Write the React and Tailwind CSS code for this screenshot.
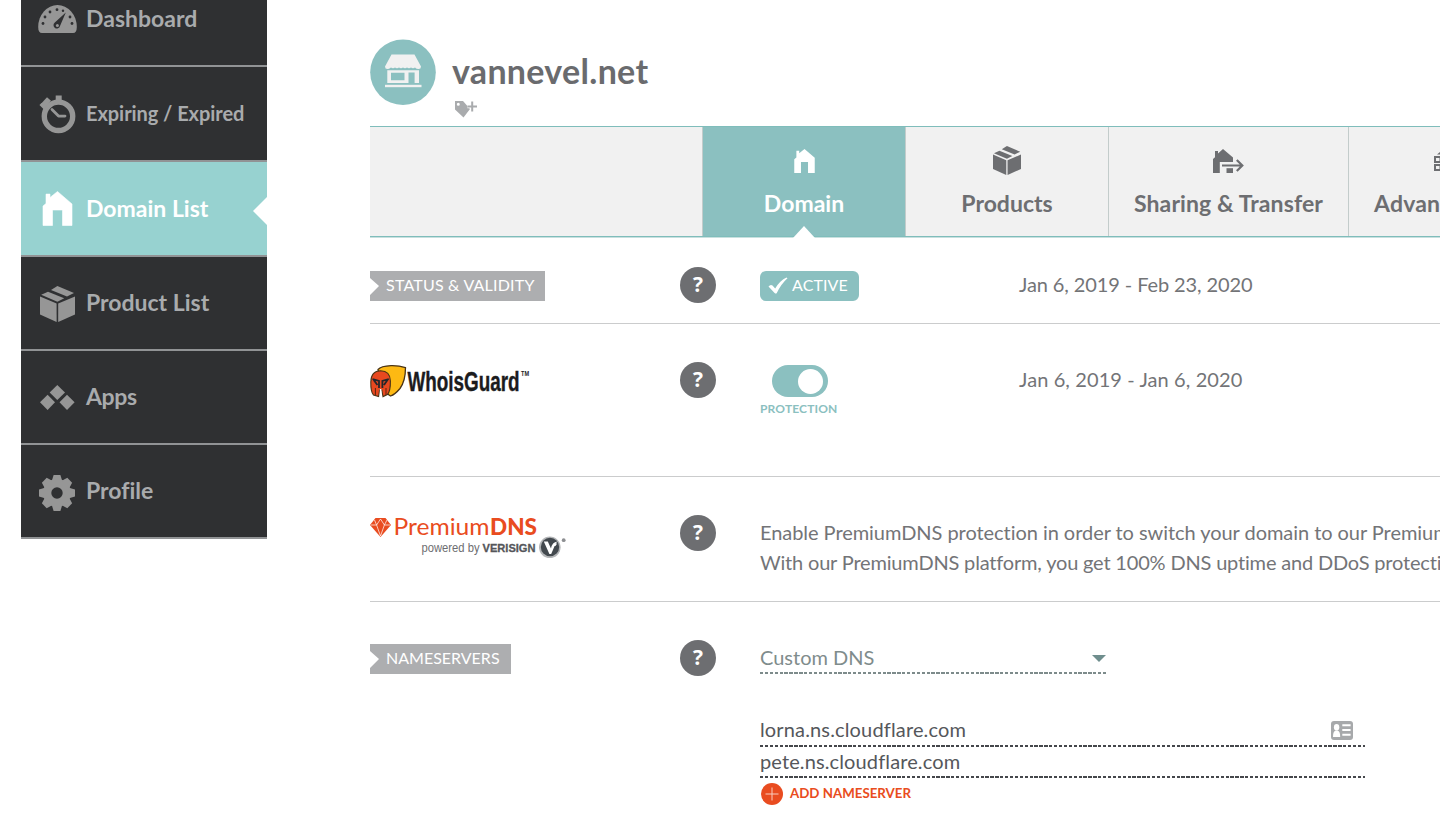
import clsx from "clsx";

const HOUSE = "M0 14.5 L3 12 V2.6 H7 V6 L14.5 0 L29 12.5 V34 H19.5 V18.5 H9.5 V34 H0 Z";

function Gauge() {
  return (
    <svg width="40" height="40" viewBox="37 -1 40 40" fill="#969696">
      <path d="M42 33 Q38.2 33 38.2 27 A19.3 22 0 0 1 76.8 27 Q76.8 33 73 33 Z" />
      <g fill="#2f3032">
        <path d="M65.8 12.5 L60 26 A3.3 3.3 0 1 1 54.8 22.6 Z" />
        <circle cx="43" cy="23.5" r="1.4" />
        <circle cx="45" cy="17" r="1.4" />
        <circle cx="50" cy="12" r="1.4" />
        <circle cx="57" cy="9.7" r="1.4" />
        <circle cx="63" cy="10.8" r="1.2" />
        <circle cx="70" cy="17" r="1.4" />
        <circle cx="72" cy="23.5" r="1.4" />
      </g>
      <circle cx="57.4" cy="25.6" r="1.5" />
    </svg>
  );
}

function Stopwatch() {
  return (
    <svg width="40" height="40" viewBox="37 93.5 40 40" fill="none" stroke="#969696">
      <circle cx="58.5" cy="115.8" r="14.2" strokeWidth="5.4" />
      <path d="M58.7 95 V100" strokeWidth="6" />
      <path d="M42.5 105.5 L49 98.5" strokeWidth="5.4" />
      <path d="M40.5 103.5 L46 109" strokeWidth="3" />
      <path d="M52 109 L58.5 115.6 H65" strokeWidth="2.8" strokeLinecap="round" strokeLinejoin="round" />
    </svg>
  );
}

function HouseSide() {
  return (
    <svg width="40" height="40" viewBox="-6 -2.5 40 40" fill="#ffffff" stroke="#ffffff" strokeLinejoin="round">
      <path d={HOUSE} strokeWidth=".6" />
    </svg>
  );
}

function Box({ className }) {
  return (
    <svg className={className} viewBox="0 0 35 36" fill="currentColor">
      <path d="M0 10.6 L16.6 17.6 V36 L0 28.6 Z" />
      <path d="M35 10.6 L18.2 17.6 V36 L35 28.6 Z" />
      <path d="M1.2 8.8 L8 5.8 L24.2 12.3 L17.4 15.7 Z" />
      <path d="M11 4 L17.4 0 L34 7 L27 10.6 Z" />
    </svg>
  );
}

function Diamonds() {
  return (
    <svg width="40" height="40" viewBox="37 377 40 40" fill="#969696">
      <path d="M57.3 385 L65 392.6 L57.3 400 L49.7 392.6 Z" />
      <path d="M47.6 394.8 L55 402.3 L47.6 410 L40 402.3 Z" />
      <path d="M67 394.8 L74.6 402.3 L67 410 L59.5 402.3 Z" />
    </svg>
  );
}

function Gear() {
  return (
    <svg width="40" height="40" viewBox="-20 -22 40 40" fill="#969696">
      <circle r="9.8" fill="none" stroke="#969696" strokeWidth="8.2" />
      {[0, 45, 90, 135, 180, 225, 270, 315].map((a) => (
        <path key={a} d="M-5.2 -12 L-3.4 -18 H3.4 L5.2 -12 Z" transform={`rotate(${a})`} />
      ))}
    </svg>
  );
}

function SideItem({ icon, label, className, labelClass }) {
  return (
    <a
      className={clsx(
        "relative flex items-center gap-[9px] border-b-2 border-[#919395] pl-4 font-bold whitespace-nowrap",
        className,
      )}
    >
      <span className="flex w-10 shrink-0 justify-center">{icon}</span>
      <span className={clsx("mb-0.5", labelClass)}>{label}</span>
    </a>
  );
}

function Sidebar() {
  return (
    <nav className="flex w-[246px] shrink-0 flex-col self-start bg-[#2f3032] text-[23px] leading-7 text-[#a9abad]">
      <SideItem icon={<Gauge />} label="Dashboard" className="h-[67px] pb-7" />
      <SideItem icon={<Stopwatch />} label="Expiring / Expired" className="h-[95px]" labelClass="text-[20px] tracking-[-0.06px]" />
      <div className="relative flex flex-col">
        <SideItem icon={<HouseSide />} label="Domain List" className="h-[95px] bg-[#97d2d0] text-white" />
        <svg className="absolute top-[35px] right-0" width="14" height="28" viewBox="0 0 14 28" fill="#ffffff">
          <path d="M14 0 V28 L0 14 Z" />
        </svg>
      </div>
      <SideItem icon={<Box className="mt-0.5 h-9 w-[35px] text-[#969696]" />} label="Product List" className="h-[94px]" />
      <SideItem icon={<Diamonds />} label="Apps" className="h-[94px]" labelClass="tracking-[-0.4px]" />
      <SideItem icon={<Gear />} label="Profile" className="h-[94px]" />
    </nav>
  );
}

function Storefront() {
  return (
    <svg width="66" height="66" viewBox="370 39 66 66">
      <circle cx="403" cy="72.2" r="32.8" fill="#8bc0c0" />
      <g fill="#f1f1f1">
        <path d="M391.5 54.5 H414.5 L421 66.5 Q421 69 418.6 69 Q416.4 69 415 67.5 Q413 69 411 67.5 Q409 69 407 67.5 Q405 69 403 67.5 Q401 69 399 67.5 Q397 69 395 67.5 Q393 69 391 67.5 Q389 69 387.4 69 Q385 69 385 66.5 Z" />
        <path fillRule="evenodd" d="M387.3 70.3 H419 V83 H414.6 V72.5 H408.5 V83 H387.3 Z M391 72.8 H404.5 V80.3 H391 Z" />
        <rect x="385" y="84.8" width="36.5" height="2.4" />
      </g>
    </svg>
  );
}

function TagPlus() {
  return (
    <svg width="24" height="18" viewBox="454 100 24 18">
      <path fillRule="evenodd" fill="#a9abad" d="M455 101 H463 L470 109 L463.5 117.5 L455 109.5 Z M456.8 104.2 a1.5 1.5 0 1 0 3 0 a1.5 1.5 0 1 0 -3 0" />
      <path d="M467.4 106.5 H477 M472.2 101.5 V111.5" stroke="#ffffff" strokeWidth="3.4" />
      <path d="M467.4 106.5 H477 M472.2 101.5 V111.5" stroke="#a9abad" strokeWidth="2" />
    </svg>
  );
}

function TransferIcon() {
  return (
    <svg width="31" height="24" viewBox="0 0 31 24" fill="#6d6e71">
      <path d="M0 10 L2 8.2 V2 H5 V4.4 L10 0 L20 8.5 V13 H6.8 V24 H0 Z" />
      <path d="M13.5 19.2 H20 V24 H13.5 Z" />
      <path d="M9 16.5 H29 M23.8 11 L29.3 16.5 L23.8 22" fill="none" stroke="#f1f1f1" strokeWidth="4.6" />
      <path d="M9 16.5 H29 M23.8 11 L29.3 16.5 L23.8 22" fill="none" stroke="#6d6e71" strokeWidth="2.2" />
    </svg>
  );
}

function ServerHouse() {
  return (
    <svg width="32" height="25" viewBox="0 0 32 25" fill="none" stroke="#6d6e71" strokeWidth="2">
      <path d="M3 6.5 L10.5 0 L18 6.5 Z" fill="#6d6e71" stroke="none" />
      <path d="M1 8.9 H18 V14 H1 Z M1 16.9 H18 V22 H1 Z M6.5 9 V14 M6.5 17 V22" />
    </svg>
  );
}

function Tab({ icon, label, className }) {
  return (
    <div className={clsx("relative flex shrink-0 flex-col items-center text-[23px] leading-7 font-bold whitespace-nowrap", className)}>
      <span className="flex h-[62px] items-center pt-[5px]">{icon}</span>
      <span>{label}</span>
    </div>
  );
}

function Tabs() {
  return (
    <div className="flex h-[111px] border-y border-[#7fbdbb] bg-[#f1f1f1] text-[#6d6e71] shadow-[0_1px_0_#c9e0df]">
      <div className="w-[333px] shrink-0 border-r border-[#c3cccb]" />
      <div className="relative w-[202px] shrink-0 bg-[#8bc0c0]">
        <Tab
          className="h-full text-white"
          label="Domain"
          icon={
            <svg className="mt-px" width="21" height="24" viewBox="0 0 29 34" fill="#ffffff">
              <path d={HOUSE} />
            </svg>
          }
        />
        <svg className="absolute -bottom-0.5 left-[90px]" width="22" height="12" viewBox="0 0 22 12" fill="#ffffff">
          <path d="M0 12 L11 0 L22 12 Z" />
        </svg>
      </div>
      <Tab className="w-[204px] border-x border-[#c3cccb]" label="Products" icon={<Box className="mb-px h-[29px] w-7" />} />
      <Tab
        className="w-[240px] border-r border-[#c3cccb]"
        label={<span className="tracking-[0.1px]">Sharing &amp; Transfer</span>}
        icon={<TransferIcon />}
      />
      <div className="flex w-40 shrink-0 flex-col text-[23px] leading-7 font-bold whitespace-nowrap">
        <span className="flex h-[62px] items-center pt-[5px] pl-[85px]">
          <ServerHouse />
        </span>
        <span className="pl-[25px] tracking-[0.2px]">Advanced DNS</span>
      </div>
    </div>
  );
}

function Help({ className }) {
  return (
    <span className={clsx("flex size-9 shrink-0 items-center justify-center rounded-full bg-[#6d6e71] pb-px font-['Open_Sans'] text-[21px] leading-none font-bold text-white", className)}>
      ?
    </span>
  );
}

function Ribbon({ children, className }) {
  return (
    <span className={clsx("flex h-[30px] items-center bg-[#adaeb0] pb-0.5 pl-4 text-base whitespace-nowrap text-white [clip-path:polygon(0_0,100%_0,100%_100%,0_100%,0_24px,9px_15px,0_7px)]", className)}>
      {children}
    </span>
  );
}

function WhoisGuardLogo() {
  return (
    <svg width="162" height="36" viewBox="370 362 162 36">
      <path d="M378 369.5 Q381 366 391 365.6 Q399 365.4 405.5 367.6 Q405.5 381 400 388.5 Q395 394.5 390.5 396 Q383 392 381 384 Z" fill="#fdb913" stroke="#4a3416" strokeWidth="1.3" />
      <path d="M373.5 395 Q370.6 392 370.8 382 Q371 371 380.6 370.8 Q390.2 371 390.4 381 Q390.6 391 387.4 394.6 L383 396.6 L381.8 390 H379.6 L378.6 396.6 Z" fill="#e8481f" stroke="#4a3416" strokeWidth="1.1" />
      <path d="M372.5 379 L379 381 V388 M388.8 379 L382.4 381 V388 M373.5 379.6 L377.4 385 M387.8 379.6 L384 385" stroke="#24262b" strokeWidth="1.8" fill="none" />
      <path d="M380.6 389 V397" stroke="#ffffff" strokeWidth="1.6" />
      <path d="M375.4 388 V395.5 M386 388 V395" stroke="#5a2412" strokeWidth="1" />
      <text x="407.5" y="390.6" fontFamily="Liberation Sans" fontWeight="700" fontSize="27" fill="#1b1b1d" stroke="#1b1b1d" strokeWidth=".4" textLength="112" lengthAdjust="spacingAndGlyphs">WhoisGuard</text>
      <text x="521" y="375.5" fontFamily="Liberation Sans" fontWeight="700" fontSize="7" fill="#1b1b1d" textLength="8" lengthAdjust="spacingAndGlyphs">TM</text>
    </svg>
  );
}

function PremiumDnsLogo() {
  return (
    <svg width="200" height="46" viewBox="370 514 200 46">
      <path d="M375.5 518 H385.5 L391 525 L380.5 537 L370 525 Z" fill="#e94c20" />
      <path d="M371 525 H376.6 L380.5 519 L384.4 525 H390 M376.6 525 L380.5 536 M380.5 536 L384.4 525 M374.5 520 L376.6 525 M384.4 525 L387 520" fill="none" stroke="#ffffff" strokeWidth=".7" />
      <text x="393.5" y="534.8" fontFamily="Lato" fontSize="23.5" fill="#e94c20" textLength="96" lengthAdjust="spacingAndGlyphs">Premium</text>
      <text x="490" y="534.8" fontFamily="Lato" fontWeight="900" fontSize="22.5" fill="#e94c20" textLength="47" lengthAdjust="spacingAndGlyphs">DNS</text>
      <text x="421.5" y="551.8" fontFamily="Liberation Sans" fontSize="12" fill="#6d6e71" textLength="58" lengthAdjust="spacingAndGlyphs">powered by</text>
      <text x="482.5" y="551.8" fontFamily="Liberation Sans" fontWeight="700" fontSize="11.5" fill="#54565a" stroke="#54565a" strokeWidth=".3" textLength="53" lengthAdjust="spacingAndGlyphs">VERISIGN</text>
      <circle cx="549.8" cy="547.3" r="10.8" fill="#b4b6b8" />
      <circle cx="550" cy="547" r="9.2" fill="#43494e" />
      <path d="M543.8 541.5 H547.8 L551 548.6 Q552 542 557.5 541.5 L555.6 543.6 H557.2 L555.4 546 H554.6 L551.2 554 H549.4 Z" fill="#ffffff" />
      <circle cx="563.7" cy="540.2" r="1.9" fill="#8d8f92" />
    </svg>
  );
}

function Row({ label, help, children, className }) {
  return (
    <section className={clsx("flex border-[#cbcccd]", className)}>
      <div className="w-[310px] shrink-0">{label}</div>
      <div className="w-20 shrink-0">{help}</div>
      {children}
    </section>
  );
}

export default function App() {
  return (
    <div className="flex h-[828px] w-[1440px] overflow-hidden bg-white pl-[21px] font-[Lato,sans-serif] text-[20px] text-[#737477] [font-variant-ligatures:none]">
      <Sidebar />
      <main className="ml-[103px] w-[1070px] shrink-0">
        <header className="flex h-[126px] items-start pt-[39px]">
          <Storefront />
          <div className="flex flex-col pl-4">
            <h1 className="pt-3 text-[34px] leading-[40px] font-bold tracking-[0.3px] text-[#6a6b6e]">vannevel.net</h1>
            <span className="mt-[9px] pl-0.5">
              <TagPlus />
            </span>
          </div>
        </header>
        <Tabs />

        <Row
          className="h-[87px] border-b pt-[30px]"
          label={<Ribbon className="mt-1 w-[175px] tracking-[0.2px]">STATUS &amp; VALIDITY</Ribbon>}
          help={<Help />}
        >
          <div className="w-[259px] shrink-0 pt-1">
            <span className="flex h-[30px] w-[99px] items-center gap-1 rounded-md bg-[#8bc0c0] pl-2 text-base text-white">
              <svg width="20" height="18" viewBox="0 0 20 18" fill="#ffffff">
                <path d="M0.5 9.5 Q2.5 7 4.5 8.5 L7.2 11.4 Q12 3.5 18.5 0.5 L19.5 1.2 Q13 7 8.8 16 Q7.8 17.2 6.6 16 Z" />
              </svg>
              <span className="mb-0.5 tracking-[0.1px]">ACTIVE</span>
            </span>
          </div>
          <span className="pt-0.5 leading-[30px] tracking-[-0.1px]">Jan 6, 2019 - Feb 23, 2020</span>
        </Row>

        <Row className="h-[153px] border-b pt-[38px]" label={<WhoisGuardLogo />} help={<Help />}>
          <div className="w-[259px] shrink-0 pt-[3px]">
            <span className="ml-[11.5px] flex h-8 w-14 items-center justify-end rounded-full bg-[#8bc0c0] pr-[5px]">
              <span className="size-[25px] rounded-full bg-white" />
            </span>
            <span className="mt-1 block text-xs leading-4 font-bold tracking-[0.15px] text-[#8bc0c0]">PROTECTION</span>
          </div>
          <span className="pt-0.5 leading-[30px] tracking-[0.1px]">Jan 6, 2019 - Jan 6, 2020</span>
        </Row>

        <Row className="h-[125px] border-b pt-[37px]" label={<PremiumDnsLogo />} help={<Help className="mt-px" />}>
          <p className="pt-[3px] leading-[30px] tracking-[-0.05px] whitespace-nowrap">
            Enable PremiumDNS protection in order to switch your domain to our PremiumDNS platform.
            <br />
            <span className="tracking-[-0.18px]">With our PremiumDNS platform, you get 100% DNS uptime and DDoS protection.</span>
          </p>
        </Row>

        <Row className="pt-[38px]" label={<Ribbon className="mt-1 w-[141px]">NAMESERVERS</Ribbon>} help={<Help />}>
          <div className="flex w-[605px] flex-col">
            <div className="flex h-8 w-[346px] items-center justify-between text-[#7f8c8c]">
              <span className="pt-px leading-[30px]">Custom DNS</span>
              <svg className="mt-1" width="14" height="7" viewBox="0 0 14 7" fill="#6f8e8d">
                <path d="M0 0 H14 L7 7 Z" />
              </svg>
            </div>
            <div className="h-0.5 w-[346px] bg-[repeating-linear-gradient(90deg,#7d8b8b_0_3.3px,transparent_3.3px_4.9px)]" />
            <div className="mt-[41px] flex h-[30px] items-center justify-between pr-3 text-[#55575b]">
              <span className="mb-0.5 tracking-[0.15px]">lorna.ns.cloudflare.com</span>
              <svg width="22" height="19" viewBox="0 0 22 19">
                <rect width="22" height="19" rx="3" fill="#a7a9ab" />
                <g fill="#ffffff">
                  <ellipse cx="5.6" cy="6.3" rx="2.7" ry="3.2" />
                  <path d="M2 16 Q2 10.4 4.6 9.5 H6.6 Q9.2 10.4 9.2 16 Z" />
                  <path d="M11.3 3.3 H19.6 V5.3 H11.3 Z M11.3 8 H19.6 V10 H11.3 Z M11.3 12.8 H19.6 V14.8 H11.3 Z" />
                </g>
              </svg>
            </div>
            <div className="h-0.5 bg-[repeating-linear-gradient(90deg,#45474b_0_3.3px,transparent_3.3px_4.9px)]" />
            <div className="flex h-[29px] items-center text-[#55575b]">
              <span className="mb-0.5 tracking-[0.12px]">pete.ns.cloudflare.com</span>
            </div>
            <div className="h-0.5 bg-[repeating-linear-gradient(90deg,#45474b_0_3.3px,transparent_3.3px_4.9px)]" />
            <div className="mt-[5px] flex items-center gap-[7px] pl-px text-[13.3px] font-bold text-[#e94c20]">
              <svg width="22" height="22" viewBox="0 0 22 22">
                <circle cx="11" cy="11" r="11" fill="#e94c20" />
                <path d="M4.5 11 H17.5 M11 4.5 V17.5" stroke="#f9cdbf" strokeWidth="1" />
              </svg>
              ADD NAMESERVER
            </div>
          </div>
        </Row>
      </main>
    </div>
  );
}
